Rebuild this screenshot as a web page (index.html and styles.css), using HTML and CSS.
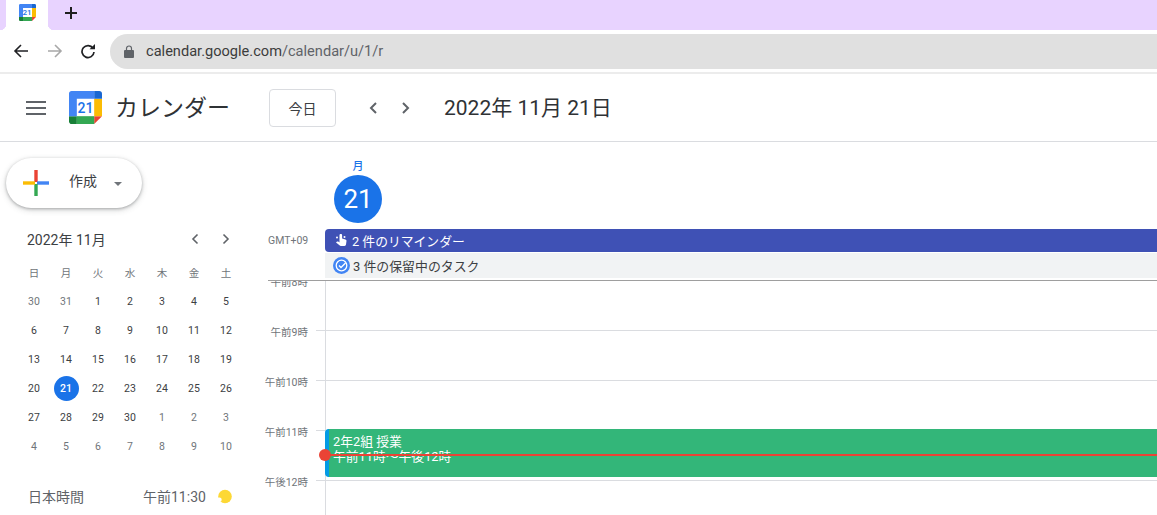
FILE: index.html
```html
<!DOCTYPE html>
<html lang="ja">
<head>
    <meta charset="UTF-8">
    <title>Google カレンダー</title>
    <link rel="stylesheet" href="styles.css">
</head>
<body>
    <svg class="defs" width="0" height="0">
        <symbol id="cal-logo" viewBox="0 0 200 200">
            <polygon fill="#fff" points="152.6,47.4 47.4,47.4 47.4,152.6 152.6,152.6"/>
            <polygon fill="#ea4335" points="152.6,200 200,152.6 152.6,152.6"/>
            <polygon fill="#fbbc04" points="200,47.4 152.6,47.4 152.6,152.6 200,152.6"/>
            <polygon fill="#34a853" points="152.6,152.6 47.4,152.6 47.4,200 152.6,200"/>
            <path fill="#188038" d="M0,152.6v31.6C0,192.9,7.1,200,15.8,200h31.6v-47.4H0z"/>
            <path fill="#1967d2" d="M200,47.4V15.8C200,7.1,192.9,0,184.2,0h-31.6v47.4H200z"/>
            <path fill="#4285f4" d="M152.6,0H15.8C7.1,0,0,7.1,0,15.8v136.8h47.4V47.4h105.3V0z"/>
        </symbol>
    </svg>

    <!-- browser -->
    <div class="tabbar">
        <div class="tab">
            <div class="cal-icon cal-icon-small">
                <svg width="17" height="17"><use href="#cal-logo"/></svg>
                <span>21</span>
            </div>
        </div>
        <svg class="newtab" width="14" height="14" viewBox="0 0 14 14">
            <path d="M7 1v12M1 7h12" stroke="#1f1f1f" stroke-width="2" fill="none"/>
        </svg>
    </div>
    <div class="toolbar">
        <svg class="nav-icon" width="16" height="16" viewBox="0 0 16 16">
            <path d="M15 8H2M8 2L2 8l6 6" stroke="#202124" stroke-width="1.6" fill="none"/>
        </svg>
        <svg class="nav-icon nav-fwd" width="16" height="16" viewBox="0 0 16 16">
            <path d="M1 8h13M8 2l6 6-6 6" stroke="#a8a8a8" stroke-width="1.6" fill="none"/>
        </svg>
        <svg class="nav-icon nav-reload" width="16" height="16" viewBox="0 0 16 16">
            <path d="M13 5.2A6 6 0 1 0 14 9" stroke="#202124" stroke-width="1.7" fill="none"/>
            <path d="M9.5 6.2H15V1z" fill="#202124"/>
        </svg>
        <div class="urlbar">
            <svg width="10" height="13" viewBox="0 0 10 13">
                <path d="M1 5h8a1 1 0 0 1 1 1v6a1 1 0 0 1-1 1H1a1 1 0 0 1-1-1V6a1 1 0 0 1 1-1z" fill="#5f6368"/>
                <path d="M2.5 5.5V3.5a2.5 2.5 0 0 1 5 0v2" stroke="#5f6368" stroke-width="1.2" fill="none"/>
            </svg>
            <span class="url"><span class="url-host">calendar.google.com</span>/calendar/u/1/r</span>
        </div>
    </div>

    <!-- header -->
    <header class="appbar">
        <svg class="menu" width="20" height="14" viewBox="0 0 20 14">
            <path d="M0 1h20M0 7h20M0 13h20" stroke="#5f6368" stroke-width="2" fill="none"/>
        </svg>
        <div class="cal-icon cal-icon-big">
            <svg width="33" height="33"><use href="#cal-logo"/></svg>
            <span>21</span>
        </div>
        <span class="app-name">カレンダー</span>
        <button class="today">今日</button>
        <svg class="chev chev-first" width="10" height="14" viewBox="0 0 10 14">
            <path d="M8 2L3 7l5 5" stroke="#5f6368" stroke-width="2" fill="none"/>
        </svg>
        <svg class="chev chev-second" width="10" height="14" viewBox="0 0 10 14">
            <path d="M2 2l5 5-5 5" stroke="#5f6368" stroke-width="2" fill="none"/>
        </svg>
        <span class="app-date">2022年 11月 21日</span>
    </header>

    <div class="main">
        <aside class="sidebar">
            <button class="create">
                <svg width="26" height="26" viewBox="0 0 26 26">
                    <rect x="11.3" y="0" width="3.400" height="12" fill="#ea4335"/>
                    <rect x="14" y="11.3" width="12" height="3.400" fill="#4285f4"/>
                    <rect x="11.3" y="14" width="3.400" height="12" fill="#34a853"/>
                    <rect x="0" y="11.3" width="12" height="3.400" fill="#fbbc04"/>
                </svg>
                <span class="create-label">作成</span>
                <span class="caret"></span>
            </button>

            <div class="mini-head">
                <span class="mini-title">2022年 11月</span>
                <svg width="8" height="12" viewBox="0 0 8 12">
                    <path d="M6.5 1.5L2 6l4.5 4.5" stroke="#5f6368" stroke-width="1.6" fill="none"/>
                </svg>
                <svg class="mini-next" width="8" height="12" viewBox="0 0 8 12">
                    <path d="M1.5 1.5L6 6l-4.5 4.5" stroke="#5f6368" stroke-width="1.6" fill="none"/>
                </svg>
            </div>

            <div class="mini-grid">
                <span class="wd">日</span><span class="wd">月</span><span class="wd">火</span><span class="wd">水</span><span class="wd">木</span><span class="wd">金</span><span class="wd">土</span>
                <span class="off">30</span><span class="off">31</span><span>1</span><span>2</span><span>3</span><span>4</span><span>5</span>
                <span>6</span><span>7</span><span>8</span><span>9</span><span>10</span><span>11</span><span>12</span>
                <span>13</span><span>14</span><span>15</span><span>16</span><span>17</span><span>18</span><span>19</span>
                <span>20</span><span class="sel"><b>21</b></span><span>22</span><span>23</span><span>24</span><span>25</span><span>26</span>
                <span>27</span><span>28</span><span>29</span><span>30</span><span class="off">1</span><span class="off">2</span><span class="off">3</span>
                <span class="off">4</span><span class="off">5</span><span class="off">6</span><span class="off">7</span><span class="off">8</span><span class="off">9</span><span class="off">10</span>
            </div>

            <div class="clock">
                <span class="clock-zone">日本時間</span>
                <span class="clock-time">午前11:30</span>
                <svg width="15" height="15" viewBox="0 0 15 15">
                    <circle cx="8" cy="7.500" r="6.800" fill="#fdd835"/>
                    <circle cx="2.400" cy="10.800" r="2.300" fill="#fff"/>
                </svg>
            </div>
        </aside>

        <section class="week">
            <div class="week-head">
                <div class="day-col">
                    <span class="day-name">月</span>
                    <span class="day-num">21</span>
                </div>
                <div class="allday">
                    <span class="gmt">GMT+09</span>
                    <div class="allday-items">
                        <div class="chip-reminder">
                            <svg width="12" height="13" viewBox="0 0 12 13">
                                <path d="M4.500 1.200a1.300 1.300 0 0 1 2.600 0v3.300l3.300 .9c.8 .2 1.200 .8 1.100 1.600l-.5 3.600c-.1 .7-.7 1.300-1.500 1.300H5.800c-.5 0-1-.2-1.300-.6L1 8.500l.8-.8c.4-.4 1-.4 1.400-.1l1.300 .9z" fill="#fff"/>
                                <circle cx="2" cy="3.500" r="1" fill="#fff"/>
                                <circle cx="9.500" cy="3" r="1" fill="#fff"/>
                            </svg>
                            <span>2 件のリマインダー</span>
                        </div>
                        <div class="chip-task">
                            <svg width="17" height="17" viewBox="0 0 17 17">
                                <circle cx="8.500" cy="8.500" r="8.500" fill="#4285f4"/>
                                <circle cx="8.500" cy="8.500" r="5.300" fill="none" stroke="#fff" stroke-width="1.300"/>
                                <path d="M6 8.500l2 2 4.500-4.500" fill="none" stroke="#fff" stroke-width="1.400"/>
                            </svg>
                            <span>3 件の保留中のタスク</span>
                        </div>
                    </div>
                </div>
            </div>

            <div class="grid">
                <div class="hour"><span class="hour-label">午前8時</span><i class="tick tick-none"></i><div class="slot slot-first"></div></div>
                <div class="hour"><span class="hour-label">午前9時</span><i class="tick"></i><div class="slot"></div></div>
                <div class="hour"><span class="hour-label">午前10時</span><i class="tick"></i><div class="slot"></div></div>
                <div class="hour"><span class="hour-label">午前11時</span><i class="tick"></i><div class="slot"></div></div>
                <div class="hour"><span class="hour-label">午後12時</span><i class="tick"></i><div class="slot"></div></div>

                <div class="event">
                    <div>2年2組 授業</div>
                    <div>午前11時～午後12時</div>
                </div>
                <div class="now-line"></div>
                <div class="now-dot"></div>
            </div>
        </section>
    </div>
</body>
</html>
```

FILE: styles.css
```css
* {
    box-sizing: border-box;
}

html, body {
    height: 515px;
    margin: 0;
    overflow: hidden;
}

body {
    font-family: Roboto, 'Noto Sans CJK JP', sans-serif;
    background-color: #fff;
    color: #3c4043;
}

.defs {
    display: block;
    height: 0;
}

.cal-icon {
    display: grid;
    flex: none;
    place-items: center;
}

.cal-icon svg,
.cal-icon span {
    grid-area: 1 / 1;
}

.cal-icon span {
    font-weight: 500;
    color: #1a73e8;
}

.cal-icon-small span {
    font-size: 8px;
}

.cal-icon-big span {
    font-size: 14px;
}

/* browser */
.tabbar {
    display: flex;
    align-items: center;
    height: 30px;
    padding-left: 6px;
    background-color: #e8d3ff;
}

.tab {
    position: relative;
    display: flex;
    justify-content: center;
    align-items: flex-start;
    width: 42px;
    height: 30px;
    padding-top: 4px;
    background-color: #fff;
}

.tab::before,
.tab::after {
    content: '';
    position: absolute;
    bottom: 0;
    width: 6px;
    height: 6px;
}

.tab::before {
    left: -6px;
    background: radial-gradient(circle at 0 0, #e8d3ff 6px, #fff 6.5px);
}

.tab::after {
    right: -6px;
    background: radial-gradient(circle at 100% 0, #e8d3ff 6px, #fff 6.5px);
}

.newtab {
    margin: -4px 0 0 16px;
}

.toolbar {
    display: flex;
    align-items: center;
    height: 44px;
    padding-left: 13px;
    border-bottom: 2px solid #ececec;
}

.nav-fwd {
    margin-left: 18px;
}

.nav-reload {
    margin-left: 17px;
}

.urlbar {
    display: flex;
    align-items: center;
    flex: 1;
    height: 35px;
    margin-left: 14px;
    padding-left: 14px;
    background-color: #e0e0e0;
    border-radius: 18px 0 0 18px;
}

.url {
    margin-left: 12px;
    font-size: 14.6px;
    color: #5f6368;
}

.url-host {
    color: #3c3c3c;
}

/* header */
.appbar {
    display: flex;
    align-items: center;
    height: 68px;
    padding-left: 26px;
    border-bottom: 1px solid #dadce0;
}

.cal-icon-big {
    margin-left: 23px;
}

.app-name {
    margin: 0 0 3px 13px;
    font-size: 23px;
    color: #2f3235;
}

.today {
    width: 67px;
    height: 38px;
    margin-left: 39px;
    background-color: #fff;
    border: 1px solid #dadce0;
    border-radius: 4px;
    font-family: inherit;
    font-size: 14px;
    color: #3c4043;
}

.chev-first {
    margin-left: 32px;
}

.chev-second {
    margin-left: 23px;
}

.app-date {
    margin: 0 0 3px 33px;
    font-size: 21px;
    color: #2f3235;
}

/* main */
.main {
    display: flex;
}

.sidebar {
    flex: none;
    width: 256px;
    padding-top: 16px;
}

.create {
    display: flex;
    align-items: center;
    width: 136px;
    height: 50px;
    margin-left: 6px;
    padding: 0 0 0 17px;
    background-color: #fff;
    border: none;
    border-radius: 25px;
    box-shadow: 0 1px 3px rgba(60, 64, 67, 0.35), 0 2px 6px rgba(60, 64, 67, 0.2);
    font-family: inherit;
}

.create-label {
    margin: 0 0 6px 20px;
    font-size: 14px;
    color: #3c4043;
}

.caret {
    width: 0;
    height: 0;
    margin: 1px 0 0 17px;
    border-left: 4.5px solid transparent;
    border-right: 4.5px solid transparent;
    border-top: 4.5px solid #70757a;
}

.mini-head {
    display: flex;
    align-items: center;
    height: 20px;
    margin-top: 21px;
    padding-left: 27px;
}

.mini-title {
    width: 164px;
    font-size: 14px;
    color: #3c4043;
}

.mini-next {
    margin-left: 23px;
}

.mini-grid {
    display: grid;
    grid-template-columns: repeat(7, 32px);
    grid-auto-rows: 29px;
    margin: 9px 0 0 18px;
    font-size: 10.5px;
    color: #3c4043;
}

.mini-grid span {
    display: flex;
    justify-content: center;
    align-items: center;
}

.mini-grid .wd,
.mini-grid .off {
    color: #70757a;
}

.mini-grid .sel b {
    display: flex;
    justify-content: center;
    align-items: center;
    width: 25px;
    height: 25px;
    border-radius: 50%;
    background-color: #1a73e8;
    color: #fff;
    font-weight: 500;
}

.clock {
    display: flex;
    align-items: center;
    margin-top: 25px;
    padding-left: 28px;
    font-size: 14px;
    color: #5f6368;
}

.clock-zone {
    width: 115px;
}

.clock svg {
    margin-left: 11px;
}

/* week */
.week {
    flex: 1;
    min-width: 0;
}

.week-head {
    position: relative;
    z-index: 2;
    background-color: #fff;
}

.day-col {
    display: flex;
    flex-direction: column;
    align-items: center;
    width: 48px;
    margin-left: 78px;
    padding-top: 17px;
}

.day-name {
    height: 16px;
    font-size: 11px;
    font-weight: 500;
    line-height: 16px;
    color: #1a73e8;
}

.day-num {
    display: flex;
    justify-content: center;
    align-items: center;
    width: 48px;
    height: 48px;
    border-radius: 50%;
    background-color: #1a73e8;
    color: #fff;
    font-size: 26px;
}

.allday {
    display: flex;
    margin: 6px 0 0 12px;
    height: 52px;
    border-bottom: 1px solid #9e9e9e;
}

.gmt {
    flex: none;
    width: 57px;
    padding-top: 5px;
    font-size: 10.5px;
    color: #70757a;
}

.allday-items {
    flex: 1;
}

.chip-reminder {
    display: flex;
    align-items: center;
    height: 23px;
    padding-left: 10px;
    background-color: #3f51b5;
    border-radius: 4px 0 0 4px;
    color: #fff;
    font-size: 12.8px;
}

.chip-reminder span {
    margin-left: 5px;
}

.chip-task {
    display: flex;
    align-items: center;
    height: 25px;
    margin-top: 1px;
    padding-left: 8px;
    background-color: #f1f3f4;
    color: #3c4043;
    font-size: 12.9px;
}

.chip-task span {
    margin-left: 3px;
}

.grid {
    position: relative;
    margin-top: -1px;
}

.hour {
    display: flex;
    height: 50px;
}

.hour-label {
    flex: none;
    width: 52px;
    height: 14px;
    margin-top: -4px;
    font-size: 10.5px;
    line-height: 14px;
    text-align: right;
    color: #70757a;
}

.tick {
    flex: none;
    width: 9px;
    margin-left: 8px;
    border-top: 1px solid #dadce0;
}

.tick-none {
    border-top: none;
}

.slot {
    flex: 1;
    border-top: 1px solid #dadce0;
    border-left: 1px solid #dadce0;
}

.slot-first {
    border-top: none;
}

.event {
    position: absolute;
    top: 149px;
    left: 69px;
    right: 0;
    height: 48px;
    padding: 5px 0 0 4px;
    background-color: #33b679;
    border-left: 4px solid #039be5;
    border-radius: 4px 0 0 4px;
    color: #fff;
    font-size: 12.8px;
    line-height: 15px;
}

.now-line {
    position: absolute;
    top: 174px;
    left: 69px;
    right: 0;
    height: 2px;
    background-color: #ea4335;
}

.now-dot {
    position: absolute;
    top: 169px;
    left: 63px;
    width: 12px;
    height: 12px;
    border-radius: 50%;
    background-color: #ea4335;
}
```
